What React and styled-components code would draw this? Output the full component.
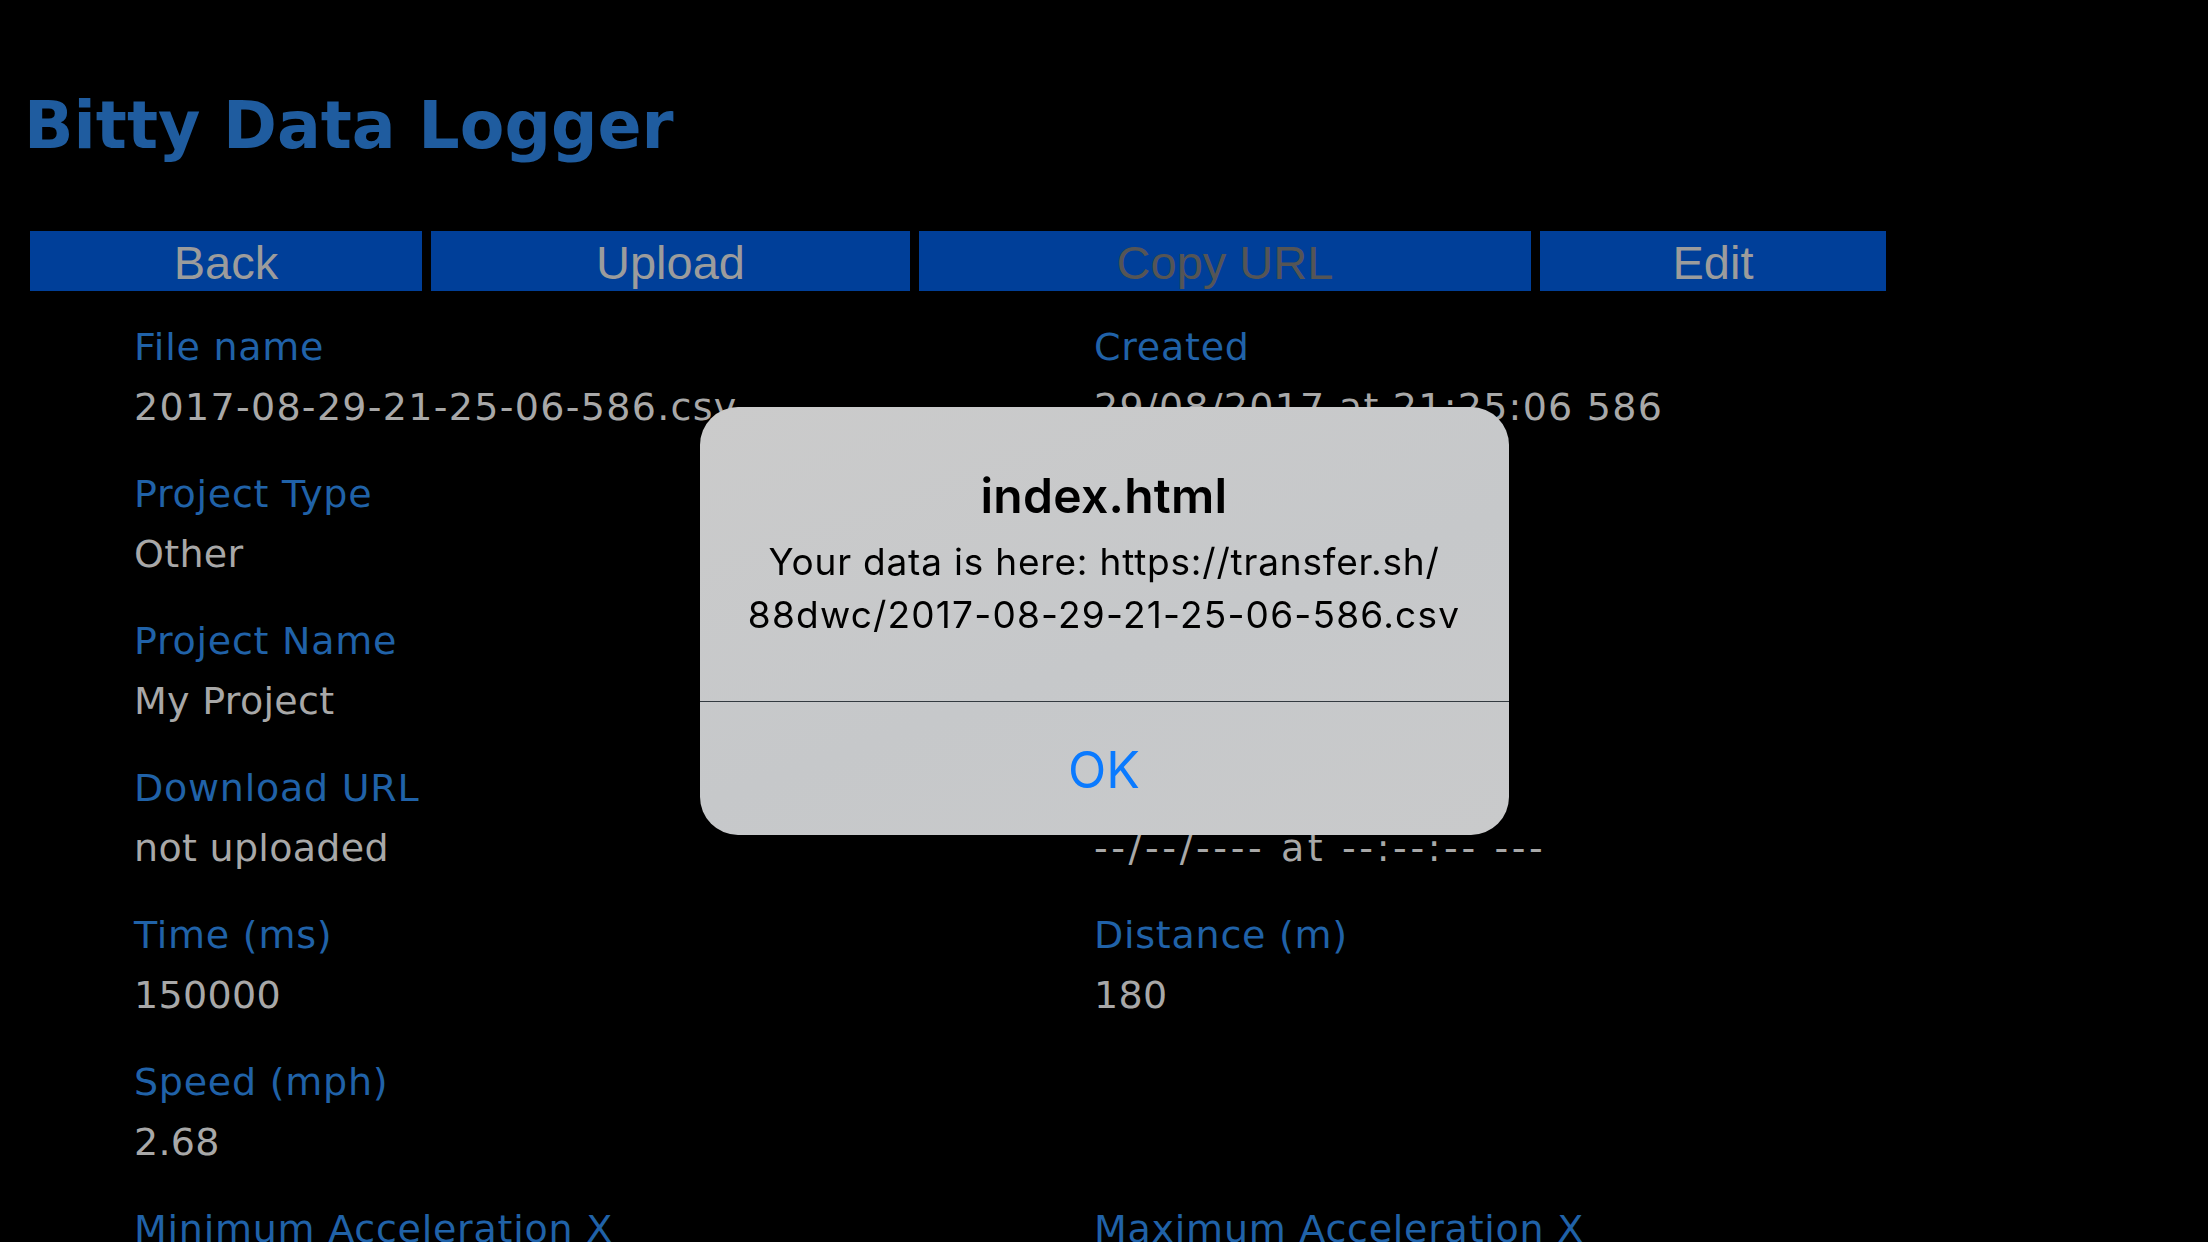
import styled, { createGlobalStyle } from "styled-components";

const GlobalStyle = createGlobalStyle`
    html, body {
        margin: 0;
        padding: 0;
        background: #000;
        overflow: hidden;
    }
`

const buttons = [
    { label: "Back", width: 392 },
    { label: "Upload", width: 479 },
    { label: "Copy URL", width: 612, disabled: true },
    { label: "Edit", width: 346 },
]

// left / right column pairs, row by row; spacing makes up for the narrower punctuation of DejaVu
const fields = [
    [{ label: "File name", value: "2017-08-29-21-25-06-586.csv", spacing: 1.3 }, { label: "Created", value: "29/08/2017 at 21:25:06 586", spacing: 1.25 }],
    [{ label: "Project Type", value: "Other" }, { label: "Samples", value: "1500" }],
    [{ label: "Project Name", value: "My Project" }, { label: "Interval", value: "100" }],
    [{ label: "Download URL", value: "not uploaded" }, { label: "Uploaded", value: "--/--/---- at --:--:-- ---", spacing: 3.6 }],
    [{ label: "Time (ms)", value: "150000" }, { label: "Distance (m)", value: "180" }],
    [{ label: "Speed (mph)", value: "2.68" }, null],
    [{ label: "Minimum Acceleration X", value: "-1.02" }, { label: "Maximum Acceleration X", value: "1.04" }],
]

const App = () => {
    return (
        <Page>
            <GlobalStyle />
            <Title>Bitty Data Logger</Title>
            <Toolbar>
                {buttons.map((b) => (
                    <Button key={b.label} $width={b.width} $disabled={b.disabled}>
                        {b.label}
                    </Button>
                ))}
            </Toolbar>
            <Fields>
                {fields.flat().map((f, i) =>
                    f ? (
                        <Field key={i}>
                            <Label>{f.label}</Label>
                            <Value $spacing={f.spacing}>{f.value}</Value>
                        </Field>
                    ) : (
                        <Field key={i} />
                    )
                )}
            </Fields>
            <Overlay>
                <Alert>
                    <AlertBody>
                        <AlertTitle>index.html</AlertTitle>
                        <AlertText $spacing={0.8}>Your data is here: https://transfer.sh/</AlertText>
                        <AlertText $spacing={1.2}>88dwc/2017-08-29-21-25-06-586.csv</AlertText>
                    </AlertBody>
                    <AlertButton>OK</AlertButton>
                </Alert>
            </Overlay>
        </Page>
    )
}

const Page = styled.div`
    height: 1242px;
    background: #000;
    overflow: hidden;
    padding-top: 86px;
    box-sizing: border-box;
`
const Title = styled.h1`
    margin: 0 0 65px 24px;
    font-family: "DejaVu Sans", Verdana, sans-serif;
    font-weight: bold;
    font-size: 65px;
    line-height: 80px;
    color: #1f5c9f;
`
const Toolbar = styled.div`
    display: flex;
    gap: 9px;
    margin-left: 30px;
`
const Button = styled.div`
    width: ${(p) => p.$width}px;
    height: 60px;
    background: #003f99;
    display: flex;
    align-items: center;
    justify-content: center;
    font-family: "Liberation Sans", Arial, sans-serif;
    font-size: 47px;
    padding-top: 2px;
    box-sizing: border-box;
    color: ${(p) => (p.$disabled ? "#555555" : "#9c9c9c")};
`
const Fields = styled.div`
    display: grid;
    grid-template-columns: 960px 960px;
    row-gap: 27px;
    padding-left: 134px;
    margin-top: 26px;
`
const Field = styled.div`
    display: flex;
    flex-direction: column;
    font-family: "DejaVu Sans", Verdana, sans-serif;
    font-size: 38px;
    line-height: 60px;
    white-space: nowrap;
`
const Label = styled.span`
    color: #2062a8;
    letter-spacing: 0.75px;
`
const Value = styled.span`
    color: #a8a8a8;
    letter-spacing: ${(p) => p.$spacing ?? 0.3}px;
`
const Overlay = styled.div`
    position: fixed;
    inset: 0;
    display: flex;
    align-items: center;
    justify-content: center;
`
const Alert = styled.div`
    width: 809px;
    height: 428px;
    border-radius: 38px;
    background: linear-gradient(160deg, #cbcbcb 0%, #c6c8ca 55%, #c9cacb 100%);
    display: flex;
    flex-direction: column;
    overflow: hidden;
    font-family: Inter, "Roboto", sans-serif;
`
const AlertBody = styled.div`
    height: 295px;
    box-sizing: border-box;
    padding-top: 59px;
    text-align: center;
    border-bottom: 1px solid #333a40;
    color: #000;
`
const AlertTitle = styled.div`
    font-size: 48px;
    font-weight: 600;
    line-height: 60px;
    margin-bottom: 9px;
    letter-spacing: 0.3px;
`
const AlertText = styled.div`
    font-size: 37px;
    line-height: 53px;
    letter-spacing: ${(p) => p.$spacing}px;
`
const AlertButton = styled.div`
    flex: 1;
    display: flex;
    align-items: center;
    justify-content: center;
    font-size: 50px;
    color: #0a7aff;
    padding-top: 2px;
`

export default App
